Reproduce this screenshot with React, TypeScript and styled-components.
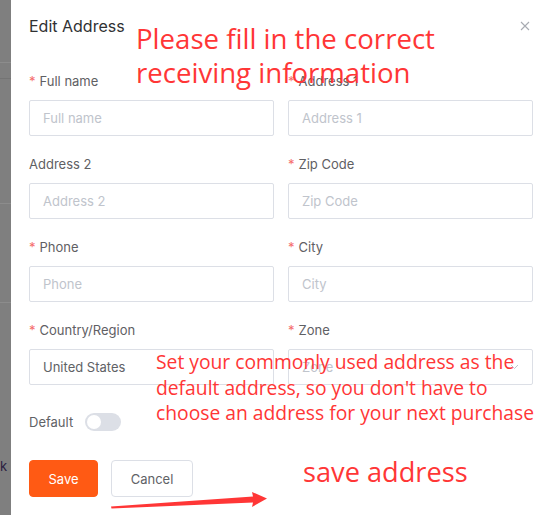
import React from 'react'
import styled, { createGlobalStyle } from 'styled-components'

const GlobalStyle = createGlobalStyle`
  html, body {
    margin: 0;
    padding: 0;
    background: #fff;
  }
  * {
    box-sizing: border-box;
  }
`

const Page = styled.div`
  position: relative;
  display: flex;
  width: 546px;
  height: 515px;
  overflow: hidden;
  font-family: Inter, "Liberation Sans", sans-serif;
`

const Backdrop = styled.div`
  position: relative;
  width: 11px;
  flex-shrink: 0;
  background: #7f7f7f;
  overflow: hidden;
`

const BackdropLine = styled.div<{ top: number; light?: boolean }>`
  position: absolute;
  left: 0;
  right: 0;
  top: ${props => props.top}px;
  height: 1px;
  background: ${props => props.light ? '#8c8c8c' : '#747474'};
`

const BackdropText = styled.span`
  position: absolute;
  left: 0;
  top: 458px;
  font-size: 13px;
  color: #2b2140;
`

const Dialog = styled.div`
  flex: 1;
  background: #fff;
  padding: 16px 13px 0 18px;
  display: flex;
  flex-direction: column;
`

const Header = styled.div`
  display: flex;
  justify-content: space-between;
  align-items: center;
  height: 20px;
`

const Title = styled.div`
  font-size: 16px;
  line-height: 20px;
  color: #303133;
`

const Close = styled.button`
  border: none;
  background: none;
  padding: 0;
  margin-right: 3px;
  width: 10px;
  height: 10px;
  display: flex;
  cursor: pointer;
`

const Form = styled.div`
  margin-top: 35px;
  display: grid;
  grid-template-columns: 245px 245px;
  column-gap: 14px;
`

const Field = styled.div`
  margin-bottom: 18px;
`

const Label = styled.div`
  height: 20px;
  line-height: 20px;
  font-size: 13px;
  color: #5f6064;
  margin-bottom: 9px;
  white-space: nowrap;
`

const Star = styled.span`
  color: #f56c6c;
  margin-right: 4px;
`

const Input = styled.div<{ filled?: boolean }>`
  height: 36px;
  border: 1px solid #dcdfe6;
  border-radius: 2px;
  padding: 0 13px;
  display: flex;
  align-items: center;
  justify-content: space-between;
  font-size: 13px;
  color: ${props => props.filled ? '#606266' : '#c0c4cc'};
`

const DefaultRow = styled.div`
  margin-top: 10px;
  display: flex;
  align-items: center;
  gap: 12px;
  height: 18px;
  font-size: 13px;
  color: #606266;
`

const Toggle = styled.div`
  width: 36px;
  height: 18px;
  border-radius: 9px;
  background: #dcdfe6;
  padding: 2px;
  display: flex;
`

const Knob = styled.div`
  width: 14px;
  height: 14px;
  border-radius: 50%;
  background: #fff;
`

const Actions = styled.div`
  margin-top: 29px;
  display: flex;
  gap: 13px;
`

const Button = styled.button<{ primary?: boolean }>`
  height: 37px;
  padding: 0;
  width: ${props => props.primary ? '69px' : '82px'};
  border-radius: 4px;
  font-family: inherit;
  font-size: 13px;
  border: 1px solid ${props => props.primary ? '#ff5a14' : '#dcdfe6'};
  background: ${props => props.primary ? '#ff5a14' : '#fff'};
  color: ${props => props.primary ? '#fff' : '#606266'};
`

const Note = styled.div<{ x: number; y: number; size: number; lh: number }>`
  position: absolute;
  left: ${props => props.x}px;
  top: ${props => props.y}px;
  font-family: "Open Sans", "Liberation Sans", sans-serif;
  font-size: ${props => props.size}px;
  line-height: ${props => props.lh}px;
  color: #ff3636;
  white-space: nowrap;
  pointer-events: none;
`

const Arrow = styled.svg`
  position: absolute;
  left: 0;
  top: 0;
  pointer-events: none;
`

const fields = [
  { label: 'Full name', required: true, value: 'Full name' },
  { label: 'Address 1', required: true, value: 'Address 1' },
  { label: 'Address 2', required: false, value: 'Address 2' },
  { label: 'Zip Code', required: true, value: 'Zip Code' },
  { label: 'Phone', required: true, value: 'Phone' },
  { label: 'City', required: true, value: 'City' },
  { label: 'Country/Region', required: true, value: 'United States', filled: true },
  { label: 'Zone', required: true, value: 'Zone', select: true },
]

export default function App() {
  return (
    <Page>
      <GlobalStyle />
      <Backdrop>
        <BackdropLine top={62} light />
        <BackdropLine top={78} />
        <BackdropLine top={203} light />
        <BackdropLine top={302} light />
        <BackdropText>k</BackdropText>
      </Backdrop>
      <Dialog>
        <Header>
          <Title>Edit Address</Title>
          <Close aria-label="close">
            <svg width="10" height="10" viewBox="0 0 10 10">
              <path d="M1 1L9 9M9 1L1 9" stroke="#a8abb2" strokeWidth="1.1" />
            </svg>
          </Close>
        </Header>
        <Form>
          {fields.map(f => (
            <Field key={f.label}>
              <Label>
                {f.required && <Star>*</Star>}
                {f.label}
              </Label>
              <Input filled={f.filled}>
                <span>{f.value}</span>
                {f.select && (
                  <svg width="9" height="6" viewBox="0 0 9 6">
                    <path d="M1 1L4.5 4.5L8 1" stroke="#c0c4cc" strokeWidth="1" fill="none" />
                  </svg>
                )}
              </Input>
            </Field>
          ))}
        </Form>
        <DefaultRow>
          Default
          <Toggle>
            <Knob />
          </Toggle>
        </DefaultRow>
        <Actions>
          <Button primary>Save</Button>
          <Button>Cancel</Button>
        </Actions>
      </Dialog>

      <Note x={136} y={21} size={27.6} lh={34}>
        Please fill in the correct
        <br />
        receiving information
      </Note>
      <Note x={156} y={349} size={19.3} lh={25.5}>
        Set your commonly used address as the
        <br />
        default address, so you don't have to
        <br />
        choose an address for your next purchase
      </Note>
      <Note x={303} y={454} size={27.2} lh={36}>
        save address
      </Note>
      <Arrow width="546" height="515" viewBox="0 0 546 515">
        <polygon points="111,506.5 111.5,508.5 253,502.5 252,507 267,498.5 252,492 253,496.5" fill="#ff3636" />
      </Arrow>
    </Page>
  )
}
